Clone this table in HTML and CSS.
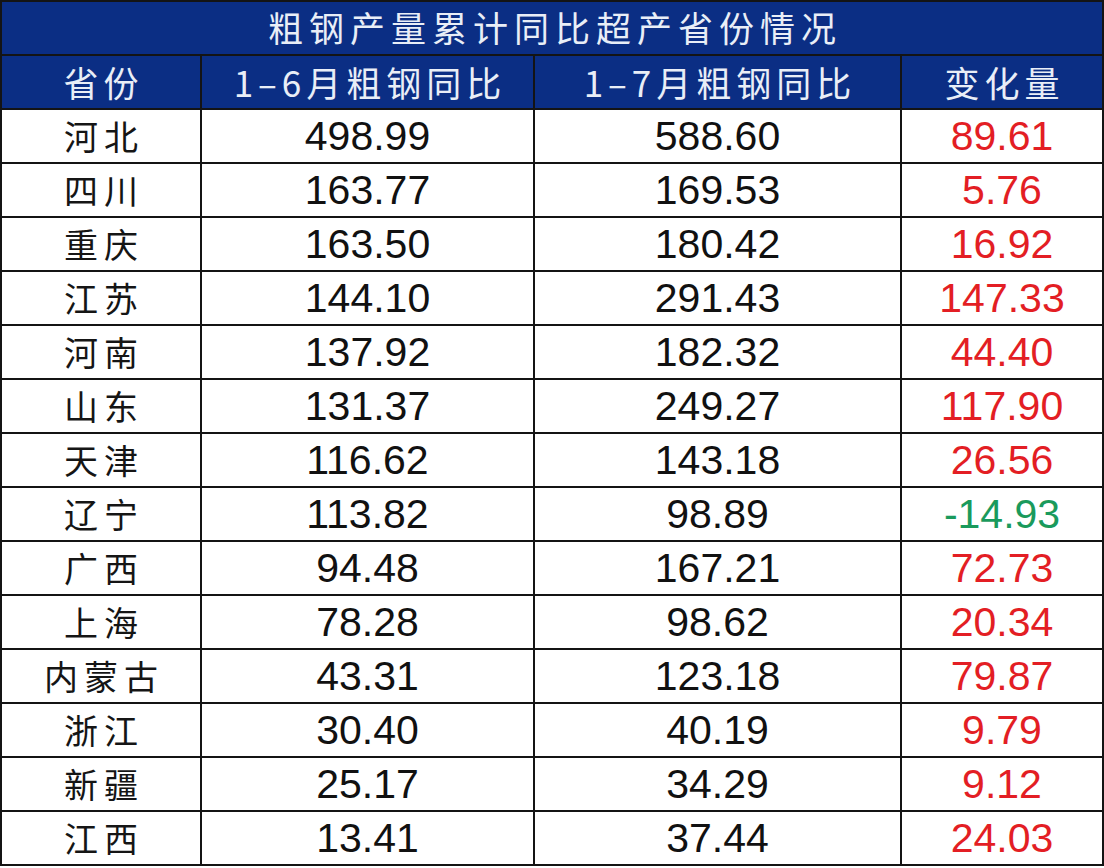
FILE: index.html
```html
<!DOCTYPE html>
<html lang="zh">
<head>
<meta charset="utf-8">
<title>粗钢产量累计同比超产省份情况</title>
<link rel="stylesheet" href="styles.css">
</head>
<body>
<table class="sheet">
  <colgroup>
    <col class="c-prov"><col class="c-a"><col class="c-b"><col class="c-d">
  </colgroup>
  <thead>
    <tr class="title-row"><th colspan="4">粗钢产量累计同比超产省份情况</th></tr>
    <tr class="head-row">
      <th>省份</th><th>1–6月粗钢同比</th><th>1–7月粗钢同比</th><th>变化量</th>
    </tr>
  </thead>
  <tbody>
    <tr><td class="prov">河北</td><td>498.99</td><td>588.60</td><td class="up">89.61</td></tr>
    <tr><td class="prov">四川</td><td>163.77</td><td>169.53</td><td class="up">5.76</td></tr>
    <tr><td class="prov">重庆</td><td>163.50</td><td>180.42</td><td class="up">16.92</td></tr>
    <tr><td class="prov">江苏</td><td>144.10</td><td>291.43</td><td class="up">147.33</td></tr>
    <tr><td class="prov">河南</td><td>137.92</td><td>182.32</td><td class="up">44.40</td></tr>
    <tr><td class="prov">山东</td><td>131.37</td><td>249.27</td><td class="up">117.90</td></tr>
    <tr><td class="prov">天津</td><td>116.62</td><td>143.18</td><td class="up">26.56</td></tr>
    <tr><td class="prov">辽宁</td><td>113.82</td><td>98.89</td><td class="down">-14.93</td></tr>
    <tr><td class="prov">广西</td><td>94.48</td><td>167.21</td><td class="up">72.73</td></tr>
    <tr><td class="prov">上海</td><td>78.28</td><td>98.62</td><td class="up">20.34</td></tr>
    <tr><td class="prov">内蒙古</td><td>43.31</td><td>123.18</td><td class="up">79.87</td></tr>
    <tr><td class="prov">浙江</td><td>30.40</td><td>40.19</td><td class="up">9.79</td></tr>
    <tr><td class="prov">新疆</td><td>25.17</td><td>34.29</td><td class="up">9.12</td></tr>
    <tr><td class="prov">江西</td><td>13.41</td><td>37.44</td><td class="up">24.03</td></tr>
  </tbody>
</table>
</body>
</html>
```
FILE: styles.css
```css
html, body {
  margin: 0;
  padding: 0;
  background: #ffffff;
}

body {
  font-family: "Liberation Sans", "Noto Sans CJK SC", sans-serif;
}

.sheet {
  border-collapse: collapse;
  table-layout: fixed;
  width: 1102px;
}

.c-prov { width: 200px; }
.c-a { width: 333px; }
.c-b { width: 367px; }
.c-d { width: 202px; }

.sheet th,
.sheet td {
  border: 2px solid #141414;
  padding: 0;
  text-align: center;
  vertical-align: middle;
  white-space: nowrap;
  overflow: hidden;
}

.sheet tr {
  height: 54px;
}

.title-row th,
.head-row th {
  background: #0b2e84;
  color: #e9eef7;
  font-family: "Noto Sans CJK SC", sans-serif;
  font-weight: 400;
  font-size: 35px;
  line-height: 48px;
}

.title-row th {
  letter-spacing: 6px;
  text-indent: 6px;
  padding-bottom: 2px;
}

.head-row th {
  letter-spacing: 5px;
  text-indent: 5px;
}

.sheet td {
  font-size: 41px;
  line-height: 50px;
  color: #111111;
}

.sheet td.prov {
  font-family: "Noto Sans CJK SC", sans-serif;
  font-size: 34px;
  letter-spacing: 6px;
  text-indent: 6px;
  color: #151515;
}

.sheet td.up {
  color: #e31e24;
}

.sheet td.down {
  color: #1a9a5c;
}
```
